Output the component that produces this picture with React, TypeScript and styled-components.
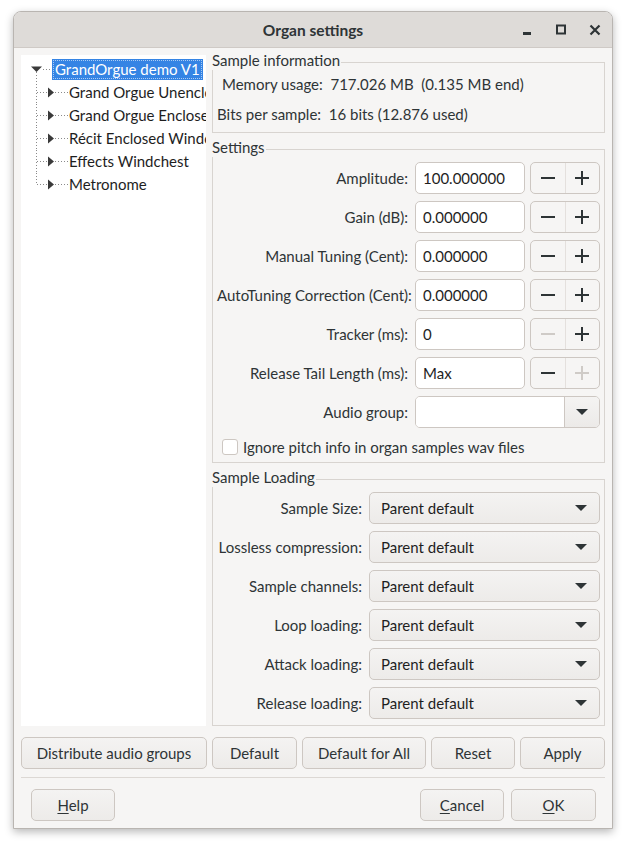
import React from "react";
import styled, { createGlobalStyle } from "styled-components";

const FONT = `"Lato", "Noto Sans", sans-serif`;

const Global = createGlobalStyle`
  html, body { margin: 0; padding: 0; background: #ffffff; }
  body { font-family: ${FONT}; font-size: 15px; color: #2e3436; }
  * { box-sizing: border-box; }
`;

const Page = styled.div`
  padding: 11px 0 0 13px;
  width: 627px;
  height: 845px;
`;

const Window = styled.div`
  width: 600px;
  height: 818px;
  display: flex;
  flex-direction: column;
  border: 1px solid #b9b5b1;
  border-radius: 8px 8px 0 0;
  background: #f6f5f4;
  box-shadow: 0 3px 9px rgba(0, 0, 0, 0.28);
  overflow: hidden;
`;

const TitleBar = styled.div`
  height: 36px;
  flex: none;
  display: grid;
  grid-template-columns: 1fr auto 1fr;
  align-items: center;
  background: #dedbd8;
  border-bottom: 1px solid #cfcac6;
`;

const Title = styled.div`
  grid-column: 2;
  font-weight: bold;
  font-size: 15.5px;
  color: #2e3436;
`;

const TitleButtons = styled.div`
  grid-column: 3;
  justify-self: end;
  display: flex;
  align-items: center;
  gap: 14px;
  padding-right: 7px;
`;

const TitleBtn = styled.div`
  width: 20px;
  height: 20px;
  display: flex;
  align-items: center;
  justify-content: center;
`;

const Body = styled.div`
  flex: 1;
  display: flex;
  flex-direction: column;
  padding: 7px;
`;

const Main = styled.div`
  height: 671px;
  flex: none;
  display: flex;
  gap: 6px;
`;

const TreePanel = styled.div`
  width: 185px;
  flex: none;
  background: #ffffff;
  padding-top: 3px;
  overflow: hidden;
  white-space: nowrap;
`;

const TreeRow = styled.div<{ $indent: number }>`
  height: 23px;
  display: flex;
  align-items: center;
  padding-left: ${(p) => p.$indent}px;
  & > svg { flex: none; }
`;

const TreeLabel = styled.span<{ $selected?: boolean }>`
  flex: none;
  font-size: 15px;
  line-height: 21px;
  padding: 0 ${(p) => (p.$selected ? "3px" : "0")};
  color: ${(p) => (p.$selected ? "#ffffff" : "#1e1e1e")};
  background: ${(p) => (p.$selected ? "#3584e4" : "transparent")};
  outline: ${(p) => (p.$selected ? "1px dotted #a9cbf3" : "none")};
  outline-offset: -2px;
`;

const RightCol = styled.div`
  flex: 1;
  display: flex;
  flex-direction: column;
  padding-top: 7px;
  gap: 16px;
`;

const Group = styled.div<{ $grow?: boolean }>`
  border: 1px solid #d8d4d0;
  display: flex;
  flex-direction: column;
  ${(p) => (p.$grow ? "flex: 1;" : "")}
`;

const Legend = styled.div`
  align-self: flex-start;
  margin: -13px 0 0 -1px;
  padding-right: 1px;
  background: #f6f5f4;
  font-size: 15px;
  line-height: 20px;
  color: #2e3436;
`;

const InfoBody = styled.div`
  display: flex;
  flex-direction: column;
  gap: 10px;
  padding: 4px 0 8px 4px;
`;

const InfoLine = styled.div<{ $indent: number }>`
  padding-left: ${(p) => p.$indent}px;
  font-size: 15px;
  line-height: 20px;
  white-space: pre;
`;

const FormGrid = styled.div<{ $labelW: number; $top: number }>`
  display: grid;
  grid-template-columns: ${(p) => p.$labelW}px 1fr;
  column-gap: 7px;
  row-gap: 7px;
  align-items: center;
  padding: ${(p) => p.$top}px 4px 0 4px;
`;

const Label = styled.div`
  text-align: right;
  font-size: 15px;
  white-space: nowrap;
`;

const FieldRow = styled.div`
  display: flex;
  gap: 5px;
  height: 32px;
`;

const TextInput = styled.div`
  width: 110px;
  height: 32px;
  background: #ffffff;
  border: 1px solid #cdc7c2;
  border-radius: 5px;
  padding-left: 7px;
  display: flex;
  align-items: center;
  font-size: 15px;
  color: #1e1e1e;
`;

const Spin = styled.div`
  width: 70px;
  height: 32px;
  display: flex;
  border: 1px solid #cdc7c2;
  border-radius: 5px;
  background: #f6f5f4;
`;

const SpinBtn = styled.div<{ $divider?: boolean }>`
  flex: 1;
  display: flex;
  align-items: center;
  justify-content: center;
  border-left: ${(p) => (p.$divider ? "1px solid #e4e0dd" : "none")};
`;

const Combo = styled.div`
  width: 185px;
  height: 32px;
  display: flex;
  border: 1px solid #cdc7c2;
  border-radius: 5px;
  overflow: hidden;
`;

const ComboEntry = styled.div`
  flex: 1;
  background: #ffffff;
`;

const ComboBtn = styled.div`
  width: 35px;
  display: flex;
  align-items: center;
  justify-content: center;
  border-left: 1px solid #cdc7c2;
  background: linear-gradient(#f4f3f2, #eceae8);
`;

const CheckRow = styled.div`
  display: flex;
  align-items: center;
  gap: 5px;
  height: 20px;
  margin: 9px 0 5px 9px;
  font-size: 15px;
`;

const CheckBox = styled.div`
  width: 16px;
  height: 16px;
  border: 1px solid #cdc7c2;
  border-radius: 3px;
  background: #ffffff;
`;

const Choice = styled.div`
  height: 32px;
  display: flex;
  align-items: center;
  justify-content: space-between;
  padding: 0 12px 0 11px;
  border: 1px solid #cdc7c2;
  border-radius: 5px;
  background: linear-gradient(#f4f3f2, #edebe9);
  font-size: 15px;
  color: #1e1e1e;
`;

const ButtonRow = styled.div`
  display: flex;
  gap: 5px;
  margin-top: 11px;
`;

const Button = styled.div<{ $w: number }>`
  width: ${(p) => p.$w}px;
  height: 32px;
  display: flex;
  align-items: center;
  justify-content: center;
  border: 1px solid #cdc7c2;
  border-radius: 5px;
  background: linear-gradient(#f4f3f2, #edebe9);
  font-size: 15px;
  color: #2e3436;
`;

const Separator = styled.div`
  height: 1px;
  background: #dcd8d4;
  margin: 8px 0 0 0;
`;

const DialogButtons = styled.div`
  display: flex;
  gap: 7px;
  padding: 11px 9px 0 10px;
`;

const Spacer = styled.div`
  flex: 1;
`;

const U = styled.span`
  text-decoration: underline;
  text-underline-offset: 2px;
`;

const Minus = ({ dim }: { dim?: boolean }) => (
  <svg width="16" height="16" viewBox="0 0 16 16">
    <rect x="1" y="7" width="14" height="2" fill={dim ? "#cfcbc7" : "#2e3436"} />
  </svg>
);

const Plus = ({ dim }: { dim?: boolean }) => (
  <svg width="16" height="16" viewBox="0 0 16 16">
    <rect x="1" y="7" width="14" height="2" fill={dim ? "#cfcbc7" : "#2e3436"} />
    <rect x="7" y="1" width="2" height="14" fill={dim ? "#cfcbc7" : "#2e3436"} />
  </svg>
);

const DownArrow = () => (
  <svg width="12" height="7" viewBox="0 0 12 7">
    <polygon points="0,0 12,0 6,6" fill="#2e3436" />
  </svg>
);

const RootConnector = () => (
  <svg width="21" height="23" viewBox="0 0 21 23">
    <polygon points="0,8.5 11,8.5 5.5,14" fill="#3a3a3a" />
    <line x1="12" y1="11.5" x2="21" y2="11.5" stroke="#8a8a8a" strokeDasharray="1 2" />
    <line x1="5.5" y1="14" x2="5.5" y2="23" stroke="#8a8a8a" strokeDasharray="1 2" />
  </svg>
);

const ChildConnector = ({ last }: { last?: boolean }) => (
  <svg width="33" height="23" viewBox="0 0 33 23">
    <line x1="0.5" y1="0" x2="0.5" y2={last ? 11.5 : 23} stroke="#8a8a8a" strokeDasharray="1 2" />
    <line x1="1" y1="11.5" x2="12" y2="11.5" stroke="#8a8a8a" strokeDasharray="1 2" />
    <polygon points="12,6.5 18,11.5 12,16.5" fill="#3a3a3a" />
    <line x1="19" y1="11.5" x2="33" y2="11.5" stroke="#8a8a8a" strokeDasharray="1 2" />
  </svg>
);

const children = [
  "Grand Orgue Unenclosed",
  "Grand Orgue Enclosed",
  "Récit Enclosed Windchest",
  "Effects Windchest",
  "Metronome",
];

type SpinRow = { label: string; value: string; minusDim?: boolean; plusDim?: boolean };

const spinRows: SpinRow[] = [
  { label: "Amplitude:", value: "100.000000" },
  { label: "Gain (dB):", value: "0.000000" },
  { label: "Manual Tuning (Cent):", value: "0.000000" },
  { label: "AutoTuning Correction (Cent):", value: "0.000000" },
  { label: "Tracker (ms):", value: "0", minusDim: true },
  { label: "Release Tail Length (ms):", value: "Max", plusDim: true },
];

const loadingRows = [
  "Sample Size:",
  "Lossless compression:",
  "Sample channels:",
  "Loop loading:",
  "Attack loading:",
  "Release loading:",
];

export default function App() {
  return (
    <Page>
      <Global />
      <Window>
        <TitleBar>
          <Title>Organ settings</Title>
          <TitleButtons>
            <TitleBtn>
              <svg width="12" height="12" viewBox="0 0 12 12">
                <rect x="2" y="8" width="8" height="3" fill="#2e3436" />
              </svg>
            </TitleBtn>
            <TitleBtn>
              <svg width="12" height="12" viewBox="0 0 12 12">
                <rect x="2" y="1.5" width="8" height="8" fill="none" stroke="#2e3436" strokeWidth="2" />
              </svg>
            </TitleBtn>
            <TitleBtn>
              <svg width="12" height="12" viewBox="0 0 12 12">
                <path d="M1.5 1.5 L10.5 10.5 M10.5 1.5 L1.5 10.5" stroke="#2e3436" strokeWidth="2.2" />
              </svg>
            </TitleBtn>
          </TitleButtons>
        </TitleBar>
        <Body>
          <Main>
            <TreePanel>
              <TreeRow $indent={10}>
                <RootConnector />
                <TreeLabel $selected>GrandOrgue demo V1</TreeLabel>
              </TreeRow>
              {children.map((c, i) => (
                <TreeRow key={c} $indent={15}>
                  <ChildConnector last={i === children.length - 1} />
                  <TreeLabel>{c}</TreeLabel>
                </TreeRow>
              ))}
            </TreePanel>
            <RightCol>
              <Group>
                <Legend>Sample information</Legend>
                <InfoBody>
                  <InfoLine $indent={5}>{"Memory usage:  717.026 MB  (0.135 MB end)"}</InfoLine>
                  <InfoLine $indent={0}>{"Bits per sample:  16 bits (12.876 used)"}</InfoLine>
                </InfoBody>
              </Group>
              <Group>
                <Legend>Settings</Legend>
                <FormGrid $labelW={191} $top={5}>
                  {spinRows.map((r) => (
                    <React.Fragment key={r.label}>
                      <Label>{r.label}</Label>
                      <FieldRow>
                        <TextInput>{r.value}</TextInput>
                        <Spin>
                          <SpinBtn>
                            <Minus dim={r.minusDim} />
                          </SpinBtn>
                          <SpinBtn $divider>
                            <Plus dim={r.plusDim} />
                          </SpinBtn>
                        </Spin>
                      </FieldRow>
                    </React.Fragment>
                  ))}
                  <Label>Audio group:</Label>
                  <Combo>
                    <ComboEntry />
                    <ComboBtn>
                      <DownArrow />
                    </ComboBtn>
                  </Combo>
                </FormGrid>
                <CheckRow>
                  <CheckBox />
                  Ignore pitch info in organ samples wav files
                </CheckRow>
              </Group>
              <Group $grow>
                <Legend>Sample Loading</Legend>
                <FormGrid $labelW={145} $top={5}>
                  {loadingRows.map((l) => (
                    <React.Fragment key={l}>
                      <Label>{l}</Label>
                      <Choice>
                        Parent default
                        <DownArrow />
                      </Choice>
                    </React.Fragment>
                  ))}
                </FormGrid>
              </Group>
            </RightCol>
          </Main>
          <ButtonRow>
            <Button $w={186}>Distribute audio groups</Button>
            <Button $w={85}>Default</Button>
            <Button $w={124}>Default for All</Button>
            <Button $w={84}>Reset</Button>
            <Button $w={85}>Apply</Button>
          </ButtonRow>
          <Separator />
          <DialogButtons>
            <Button $w={84}>
              <span>
                <U>H</U>elp
              </span>
            </Button>
            <Spacer />
            <Button $w={84}>
              <span>
                <U>C</U>ancel
              </span>
            </Button>
            <Button $w={85}>
              <span>
                <U>O</U>K
              </span>
            </Button>
          </DialogButtons>
        </Body>
      </Window>
    </Page>
  );
}
